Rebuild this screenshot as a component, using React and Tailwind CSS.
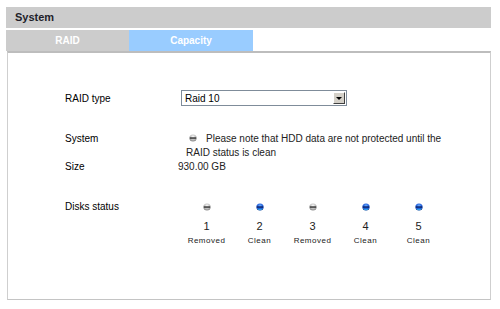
import React from 'react'

const font = { fontFamily: '"Liberation Sans", Arial, sans-serif' }

const Led = ({ color = 'gray' }) => {
  const blue = color === 'blue'
  const id = blue ? 'ledBlue' : 'ledGray'
  return (
    <svg width="8" height="8" viewBox="0 0 8 8" className="block">
      <defs>
        <radialGradient id={id} cx="50%" cy="35%" r="60%">
          <stop offset="0%" stopColor={blue ? '#6fb2ff' : '#ffffff'} />
          <stop offset="70%" stopColor={blue ? '#1a55d6' : '#b8b8b8'} />
          <stop offset="100%" stopColor={blue ? '#0b2f8a' : '#8a8a8a'} />
        </radialGradient>
      </defs>
      <circle cx="4" cy="4" r="3.6" fill={`url(#${id})`} />
      <rect x="0.8" y="3.3" width="6.4" height="1.5" fill={blue ? '#0a2470' : '#3a3a3a'} />
      {blue && <path d="M1.6 5.6 A3 3 0 0 0 6.4 5.6" stroke="#33c6ff" strokeWidth="0.9" fill="none" />}
    </svg>
  )
}

const disks = [
  { n: 1, status: 'Removed', led: 'gray' },
  { n: 2, status: 'Clean', led: 'blue' },
  { n: 3, status: 'Removed', led: 'gray' },
  { n: 4, status: 'Clean', led: 'blue' },
  { n: 5, status: 'Clean', led: 'blue' },
]

export default function App() {
  return (
    <div className="w-[500px] h-[309px] bg-white overflow-hidden pt-[7px] pl-[6px]" style={font}>
      <div className="w-[485px]">
        {/* Title bar */}
        <div className="h-[21px] bg-[#cccccc] flex items-center pl-[9px] text-[11px] font-bold text-[#1e1e2a]">
          System
        </div>

        {/* Tabs */}
        <div className="flex mt-[2px] h-[21px]">
          <div className="w-[123px] bg-[#cccccc] flex items-center justify-center text-white font-bold text-[10px]">RAID</div>
          <div className="w-[124px] bg-[#99ccff] flex items-center justify-center text-white font-bold text-[10px]">Capacity</div>
        </div>

        {/* Panel */}
        <div className="h-[249px] border-t-2 border-t-[#bdbdbd] border-x border-b border-x-[#cfcfcf] border-b-[#c4c4c4] ml-[1px] w-[484px] pt-[37px] pl-[57px] text-[10px] text-black">
          {/* RAID type */}
          <div className="flex items-center h-[16px]">
            <div className="w-[116px]">RAID type</div>
            <div className="w-[166px] h-[16px] border border-[#7f8c9a] bg-white flex items-center justify-between pl-[3px] pr-[1px]">
              <span className="text-[10px] text-black">Raid 10</span>
              <div className="w-[12px] h-[12px] bg-[#d4d0c8] border border-t-white border-l-white border-r-[#404040] border-b-[#404040] flex items-center justify-center">
                <div className="w-0 h-0 border-l-[3px] border-r-[3px] border-t-[3px] border-l-transparent border-r-transparent border-t-black" />
              </div>
            </div>
          </div>

          {/* System */}
          <div className="flex mt-[26px] leading-[14px]">
            <div className="w-[116px]">System</div>
            <div className="w-[265px] pl-[5px] text-[#222]">
              <span className="inline-block align-middle mr-[9px] ml-[3px] relative top-[-1px]"><Led /></span>
              Please note that HDD data are not protected until the RAID status is clean
            </div>
          </div>

          {/* Size */}
          <div className="flex leading-[14px]">
            <div className="w-[113px]">Size</div>
            <div className="text-[#222]">930.00 GB</div>
          </div>

          {/* Disks status */}
          <div className="flex mt-[29px]">
            <div className="w-[116px] leading-[14px] -mt-[3px]">Disks status</div>
            <div className="flex -ml-[1px]">
              {disks.map((d) => (
                <div key={d.n} className="w-[53px] flex flex-col items-center">
                  <Led color={d.led} />
                  <div className="text-[11px] leading-[14px] mt-[8px] text-[#222]">{d.n}</div>
                  <div className="text-[8px] leading-[10px] mt-[3px] tracking-[0.5px] text-[#222]">{d.status}</div>
                </div>
              ))}
            </div>
          </div>
        </div>
      </div>
    </div>
  )
}
